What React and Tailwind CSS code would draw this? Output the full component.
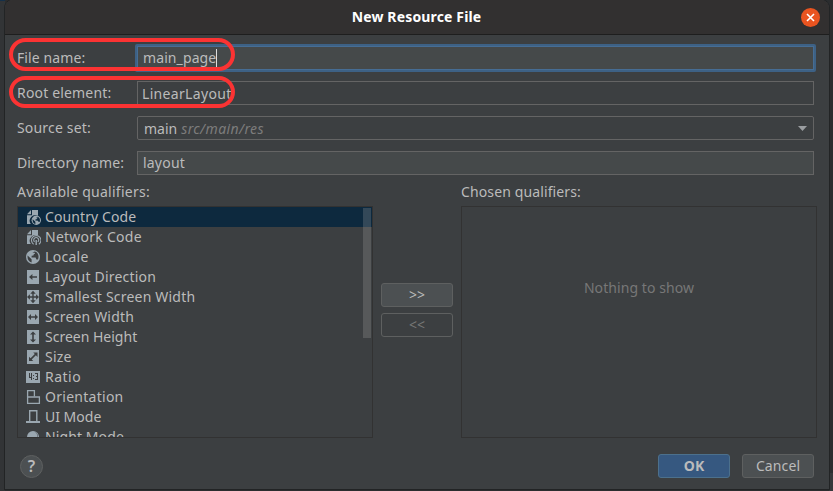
import React from "react";

const INK = "#9aa7b0";
const HOLE = "#3c3f41";

function Globe({ cx, cy, r, bg = HOLE }) {
  return (
    <g transform={`translate(${cx} ${cy}) scale(${r / 7})`}>
      <circle r="7" fill={INK} />
      <path d="M-5.4-1.4 L-1.4 2.2 L-1.4 5.5 C-4 5 -5.9 2.5 -5.4-1.4Z M-.6-4.6 L1.8-5.4 C5 -4.6 6.4-1 5 2.6 L3.4 2.4 L2.6.6 L-1.4.4 L-1.4-1.2 L.4-1.4 L.8-2.8 L2.2-3.4 L1.6-4.2Z" fill={bg} />
    </g>
  );
}

function FileCorner() {
  return (
    <>
      <path d="M2 5.200L6 1v4.200z" fill={INK} />
      <path d="M7 1h6v5.800A5.600 5.600 0 0 0 5.800 15H2V6.200h5z" fill={INK} />
    </>
  );
}

function Block({ children }) {
  return (
    <>
      <path d="M2 1h12v14H2z" fill={INK} shapeRendering="crispEdges" />
      <g fill={HOLE} transform="translate(0 -.5)">{children}</g>
    </>
  );
}

const icons = {
  country: (
    <>
      <FileCorner />
      <Globe cx={11.3} cy={11.3} r={4.7} bg="#0d293e" />
    </>
  ),
  network: (
    <>
      <FileCorner />
      <g fill="none" stroke={INK} strokeWidth="1.1">
        <path d="M8.6 15.2a4.7 4.7 0 1 1 5.2 0" />
        <path d="M9.6 12.9a2.5 2.5 0 1 1 3.2 0" />
        <path d="M11.2 11v5" strokeWidth="1.4" />
      </g>
    </>
  ),
  locale: <Globe cx={8} cy={8} r={7} />,
  direction: <Block><path d="M4 8.5L7.4 5.6V7.7H12v1.6H7.4v2.1z" /></Block>,
  smallest: (
    <Block>
      <path d="M8 2.200l2.700 3H8.700v2.600h2.400V5.800L14 8.500l-2.900 2.700V9.200H8.700v2.600h2L8 14.800l-2.700-3h2V9.200H4.900v2L2 8.500l2.900-2.700v2h2.400V5.200h-2z" />
    </Block>
  ),
  width: <Block><path d="M3 8.5l3-2.9v2.1h4V5.6l3 2.9-3 2.9V9.300H6v2.100z" /></Block>,
  height: <Block><path d="M8 3l3 3H8.800v5H11l-3 3-3-3h2.200V6H5z" /></Block>,
  size: <Block><path d="M12.5 4v4.400l-1.600-1.600-4.200 4.200 1.500 1.500H4V8.200l1.600 1.600 4.200-4.200L8.200 4z" /></Block>,
  ratio: (
    <>
      <path d="M1 2h14v12H1z" fill={INK} shapeRendering="crispEdges" />
      <path d="M4 4h1v4h1V4h1v7H6V9H4z M8 6h1v1H8z M8 9h1v1H8z M10 4h3v7h-3v-1h2V8h-1V7h1V5h-2z" fill={HOLE} shapeRendering="crispEdges" />
    </>
  ),
  orientation: (
    <g fill="none" stroke={INK} strokeWidth="1.3">
      <path d="M2.600 8V1.700h6.800V7.500" />
      <path d="M2.600 8h11.800v6.300H2.600z" />
    </g>
  ),
  mode: (
    <path d="M4 1h8.500v11H15v2H1v-2h3z M5.400 2.400V12h5.700V2.400z" fillRule="evenodd" fill={INK} />
  ),
  night: (
    <>
      <circle cx="8" cy="8" r="6" fill={INK} />
      <path d="M9.800 3a5.300 5.300 0 0 1 1.400 8.200C14 9 13.600 4.500 9.800 3z" fill={HOLE} />
    </>
  ),
};

const qualifiers = [
  ["country", "Country Code", "tracking-[0.1px]"],
  ["network", "Network Code", "tracking-[0.25px]"],
  ["locale", "Locale", "tracking-[0.3px]"],
  ["direction", "Layout Direction", "tracking-[0.2px]"],
  ["smallest", "Smallest Screen Width", "tracking-[0.2px]"],
  ["width", "Screen Width", "tracking-[0.17px]"],
  ["height", "Screen Height", "tracking-[0px]"],
  ["size", "Size", "tracking-[0.2px]"],
  ["ratio", "Ratio", "tracking-[0.5px]"],
  ["orientation", "Orientation", "tracking-[0.27px]"],
  ["mode", "UI Mode", "tracking-[0px]"],
  ["night", "Night Mode", "tracking-[0.1px]"],
];

function Field({ label, spacing, children }) {
  return (
    <div className="flex h-6 items-center">
      <div className="w-[120px] shrink-0">
        <span className={spacing}>{label}</span>
      </div>
      {children}
    </div>
  );
}

export default function App() {
  return (
    <div className="relative flex h-[491px] w-[833px] overflow-hidden bg-[#2b2d2f] font-['Noto_Sans',sans-serif] text-[14px] leading-5 whitespace-nowrap text-[#bbbbbb]">
      <div className="w-[5px] shrink-0 border-t border-[#14304a] bg-[#323436]" />
      <div className="z-10 flex h-[489px] w-[824px] shrink-0 flex-col overflow-hidden rounded-t-lg bg-[#3c3f41] shadow-[0_0_0_1px_#222425]">
        <header className="flex h-[35px] shrink-0 items-center border-b border-[#1e1e1e] bg-[#323030] pr-[9px]">
          <h1 className="flex-1 pl-[27px] text-center text-[14px] font-bold tracking-[0.15px] text-white">New Resource File</h1>
          <button className="flex size-[19px] items-center justify-center rounded-full bg-[#e95420]">
            <svg width="9" height="9" viewBox="0 0 9 9"><path d="M1 1l7 7M8 1L1 8" stroke="#fff" strokeWidth="1.6" /></svg>
          </button>
        </header>

        <main className="flex flex-col px-3 pt-[11px]">
          <div className="flex flex-col gap-[11px]">
            <Field label="File name:" spacing="tracking-[0.1px]">
              <div className="-mr-px -ml-0.5 flex h-7 flex-1 items-center rounded-[2px] border-2 border-[#3d6185] bg-[#45494a] pl-[6px] shadow-[inset_0_0_0_1px_#466d94]">
                <span className="tracking-[0.1px]">main_page</span>
                <i className="h-[18px] w-px bg-[#dddddd]" />
              </div>
              <div className="w-0.5" />
            </Field>
            <Field label="Root element:" spacing="tracking-[0.17px]">
              <div className="flex h-6 w-[677px] items-center border border-[#646464] pt-px pl-1 tracking-[0.33px]">LinearLayout</div>
            </Field>
            <Field label="Source set:" spacing="tracking-[0.17px]">
              <div className="flex h-6 w-[677px] items-center rounded-[2px] border border-[#646464] pt-px pr-[6px] pl-[6px]">
                <span>main</span>
                <span className="ml-1 flex-1 tracking-[0.4px] text-[#7c7c7c] italic">src/main/res</span>
                <svg width="9" height="5"><path d="M0 0h9L4.500 5z" fill="#9a9da0" /></svg>
              </div>
            </Field>
            <Field label="Directory name:" spacing="tracking-[0.13px]">
              <div className="flex h-6 w-[677px] items-center border border-[#646464] bg-[#45494a] pl-[5px] tracking-[0.2px]">layout</div>
            </Field>
          </div>

          <div className="mt-[7px] flex">
            <section className="w-[356px]">
              <h2 className="h-6 tracking-[0.25px]">Available qualifiers:</h2>
              <div className="relative h-[232px] overflow-hidden border border-[#323232]">
                <ul>
                  {qualifiers.map(([icon, name, spacing], i) => (
                    <li key={name} className={i === 0 ? "flex h-5 items-center gap-1 bg-[#0d293e] pl-[7px]" : "flex h-5 items-center gap-1 pl-[7px]"}>
                      <svg className="shrink-0" width="16" height="16" viewBox="0 0 16 16">{icons[icon]}</svg>
                      <span className={spacing}>{name}</span>
                    </li>
                  ))}
                </ul>
                <div className="absolute top-px right-px h-[130px] w-2 bg-[#a6a6a6]/25" />
              </div>
            </section>
            <div className="mx-2 mt-[101px] flex w-[72px] flex-col gap-[6px] text-center">
              <button className="h-6 rounded-[3px] border border-[#5e6060] bg-[#4c5052] leading-[22px]">&gt;&gt;</button>
              <button className="h-6 rounded-[3px] border border-[#5e6060] leading-[22px] text-[#777777]">&lt;&lt;</button>
            </div>
            <section className="w-[356px]">
              <h2 className="h-6 tracking-[0.12px]">Chosen qualifiers:</h2>
              <div className="h-[232px] border border-[#323232] pt-[71px] text-center tracking-[0.08px] text-[#777777]">Nothing to show</div>
            </section>
          </div>
        </main>

        <footer className="mt-4 flex items-center px-[15px]">
          <button className="size-[23px] rounded-full border border-[#5e6060] bg-[#4c5052] text-[16px] leading-[21px] font-semibold">?</button>
          <button className="ml-auto h-6 w-[72px] rounded-[3px] border border-[#4c708c] bg-[#365880] leading-[22px] font-bold">OK</button>
          <button className="ml-3 h-6 w-[72px] rounded-[3px] border border-[#5e6060] bg-[#4c5052] leading-[22px] tracking-[0.1px]">Cancel</button>
        </footer>
      </div>
      <div className="mt-[473px] flex-1 bg-[#35383a]" />

      <div className="absolute top-[38px] left-[9px] z-20 h-[33px] w-[226px] rounded-[17px] border-4 border-[#fb3333]" />
      <div className="absolute top-[76px] left-[9px] z-20 h-[32px] w-[226px] rounded-[16px] border-4 border-[#fb3333]" />
    </div>
  );
}
